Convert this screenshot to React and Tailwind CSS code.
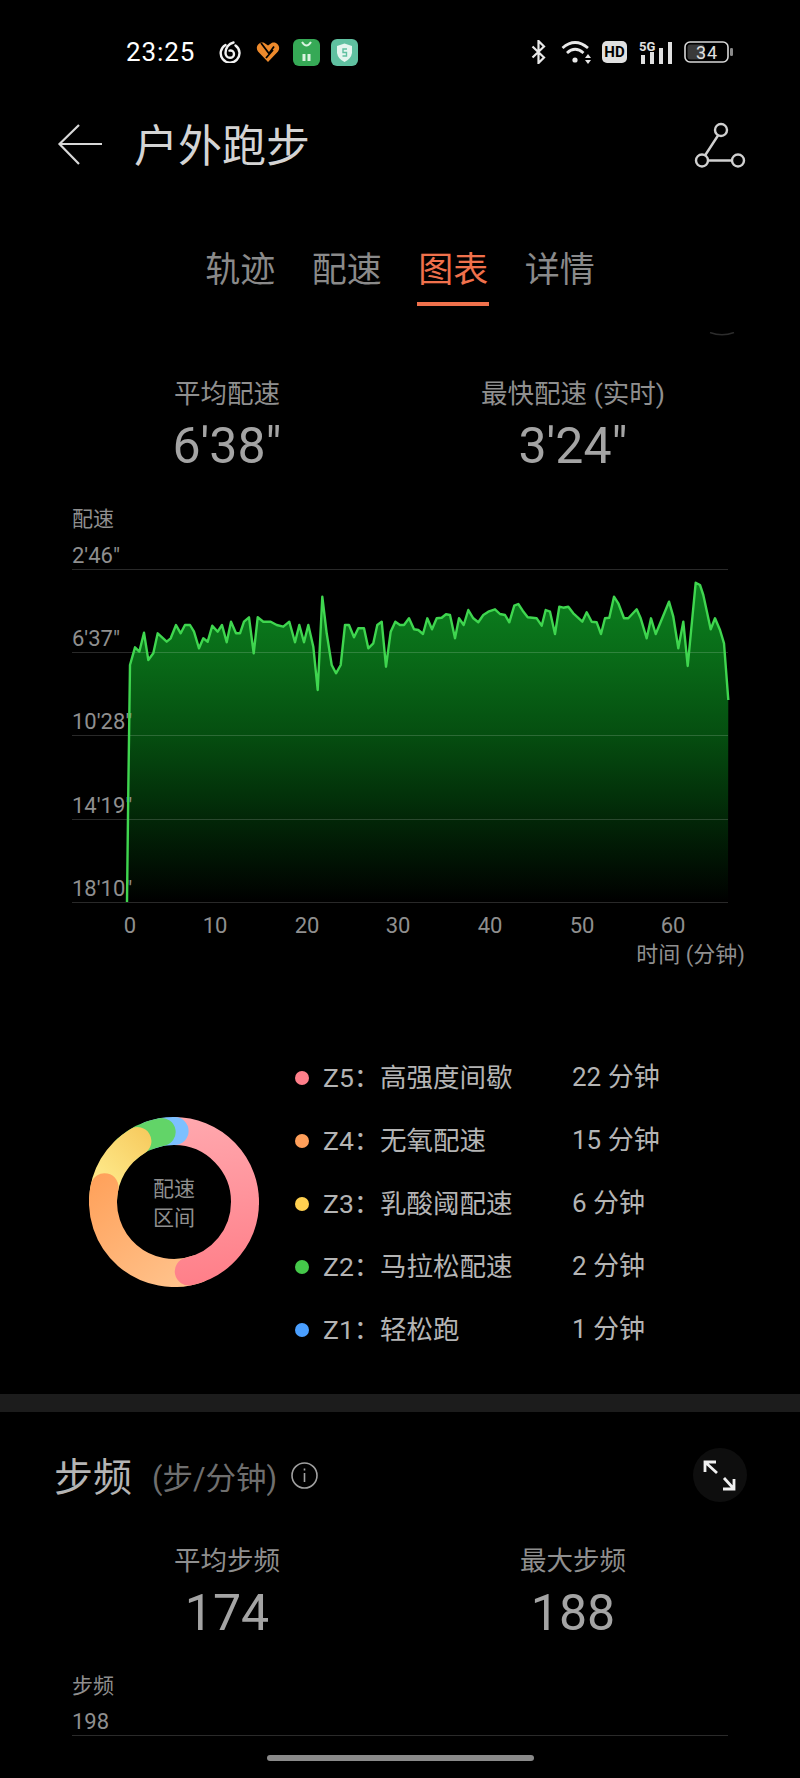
import React from 'react';

const CJK = "font-['Roboto','Noto_Sans_CJK_SC',sans-serif]";

// traced from the reference, in crop coordinates (x/3 + offset, y/3 + 490)
const leftTrace = [
  [235, 900], [240, 525], [250, 490], [255, 472], [268, 485], [282, 428], [295, 510], [310, 490], [323, 430], [350, 455],
  [362, 445], [378, 405], [392, 430], [405, 405], [420, 405], [432, 425], [447, 475], [460, 445], [473, 455], [487, 407],
  [503, 425], [516, 405], [530, 457], [543, 395], [558, 430], [570, 430], [582, 395], [597, 382], [611, 490], [623, 382],
  [640, 395], [662, 395], [680, 405], [700, 410], [718, 395], [735, 457], [748, 405], [762, 457], [775, 405], [790, 470],
  [803, 600], [817, 320], [830, 430], [845, 525], [858, 550], [872, 525], [885, 405], [897, 405], [912, 442], [925, 415],
  [942, 415], [955, 475], [970, 460], [982, 405], [995, 395], [1008, 530], [1022, 425], [1036, 395],
];
const rightTrace = [
  [0, 405], [12, 405], [27, 385], [42, 418], [55, 420], [69, 432], [82, 385], [96, 418], [110, 385], [125, 383],
  [138, 373], [150, 375], [165, 445], [177, 385], [191, 405], [205, 360], [220, 385], [235, 397], [250, 375], [265, 365],
  [285, 358], [300, 372], [315, 375], [328, 397], [343, 347], [355, 342], [368, 362], [383, 382], [410, 385], [425, 407],
  [437, 360], [450, 365], [465, 432], [478, 350], [490, 353], [505, 350], [520, 370], [547, 395], [560, 367], [575, 395],
  [590, 397], [603, 432], [615, 385], [628, 383], [642, 320], [655, 340], [672, 385], [685, 385], [710, 358], [722, 385],
  [740, 445], [753, 385], [767, 432], [807, 335], [820, 380], [835, 475], [850, 395], [863, 528], [887, 278], [900, 285],
  [910, 315], [932, 418], [945, 385], [960, 420], [972, 460], [985, 630],
];
const trace = [
  [127, 902],
  ...leftTrace.map(([x, y]) => [x / 3 + 50, y / 3 + 490]),
  ...rightTrace.map(([x, y]) => [x / 3 + 400, y / 3 + 490]),
];
const linePts = trace.map(([x, y]) => `${x.toFixed(1)},${y.toFixed(1)}`).join(' ');

const yLabels = [
  { text: `2'46"`, y: 569 },
  { text: `6'37"`, y: 652 },
  { text: `10'28"`, y: 735 },
  { text: `14'19"`, y: 819 },
  { text: `18'10"`, y: 902 },
];
const xLabels = [[0, 130], [10, 215], [20, 307], [30, 398], [40, 490], [50, 582], [60, 673]];

const PaceChart = () => (
  <svg viewBox="0 500 800 470" className="block mt-[28px] w-[800px] h-[470px]">
    <defs>
      <linearGradient id="paceFill" gradientUnits="userSpaceOnUse" x1="0" y1="575" x2="0" y2="902">
        <stop offset="0" stopColor="#0c8420" />
        <stop offset="0.24" stopColor="#096c18" />
        <stop offset="0.49" stopColor="#054e10" />
        <stop offset="0.75" stopColor="#022607" />
        <stop offset="1" stopColor="#000000" />
      </linearGradient>
    </defs>
    <text x="72" y="526" fontSize="21" fill="#8f8f8f" fontFamily="Roboto, 'Noto Sans CJK SC', sans-serif">配速</text>
    <polygon points={`${linePts} 728,902`} fill="url(#paceFill)" />
    {yLabels.map((l) => (
      <g key={l.text}>
        <line x1="72" x2="728" y1={l.y + 0.5} y2={l.y + 0.5} stroke="#ffffff" strokeOpacity="0.16" />
        <text x="72" y={l.y - 6} fontSize="22" fill="#8f8f8f" fontFamily="Roboto, sans-serif">{l.text}</text>
      </g>
    ))}
    <polyline points={linePts} fill="none" stroke="#3fd64f" strokeWidth="2.4" strokeLinejoin="round" />
    {xLabels.map(([v, x]) => (
      <text key={v} x={x} y="933" fontSize="22" fill="#8f8f8f" textAnchor="middle" fontFamily="Roboto, sans-serif">{v}</text>
    ))}
    <text x="745" y="962" fontSize="22" fill="#8f8f8f" textAnchor="end" fontFamily="Roboto, 'Noto Sans CJK SC', sans-serif">时间 (分钟)</text>
  </svg>
);

const arc = (from, to, r = 71, c = 85) => {
  const pt = (deg) => {
    const a = ((deg - 90) * Math.PI) / 180;
    return `${(c + r * Math.cos(a)).toFixed(2)} ${(c + r * Math.sin(a)).toFixed(2)}`;
  };
  const large = to - from > 180 ? 1 : 0;
  return `M${pt(from)} A${r} ${r} 0 ${large} 1 ${pt(to)}`;
};

const Donut = () => (
  <svg viewBox="0 0 170 170" className="w-[170px] h-[170px] mb-[4px] shrink-0">
    <defs>
      <linearGradient id="zoneOrange" gradientUnits="userSpaceOnUse" x1="10" y1="60" x2="100" y2="170">
        <stop offset="0" stopColor="#ffa25c" />
        <stop offset="1" stopColor="#ffc48e" />
      </linearGradient>
      <linearGradient id="zoneYellow" gradientUnits="userSpaceOnUse" x1="20" y1="60" x2="70" y2="10">
        <stop offset="0" stopColor="#fde584" />
        <stop offset="1" stopColor="#f6c658" />
      </linearGradient>
      <linearGradient id="zonePink" gradientUnits="userSpaceOnUse" x1="100" y1="0" x2="120" y2="170">
        <stop offset="0" stopColor="#ffa8ae" />
        <stop offset="1" stopColor="#ff7e88" />
      </linearGradient>
    </defs>
    <g fill="none" strokeWidth="28">
      <path d={arc(0, 92)} stroke="url(#zonePink)" />
      <path d={arc(340, 360.5)} stroke="#7cc0ff" strokeLinecap="round" />
      <path d={arc(318, 350)} stroke="#62d468" strokeLinecap="round" />
      <path d={arc(272, 329)} stroke="url(#zoneYellow)" strokeLinecap="round" />
      <path d={arc(160, 282)} stroke="url(#zoneOrange)" strokeLinecap="round" />
      <path d={arc(90, 168)} stroke="url(#zonePink)" strokeLinecap="round" />
    </g>
    <text x="85" y="79" fontSize="21" fill="#8f8f8f" textAnchor="middle" fontFamily="'Noto Sans CJK SC', sans-serif">配速</text>
    <text x="85" y="108" fontSize="21" fill="#8f8f8f" textAnchor="middle" fontFamily="'Noto Sans CJK SC', sans-serif">区间</text>
  </svg>
);

const zones = [
  { dot: 'bg-[#ff7f8a]', zone: 'Z5：', name: '高强度间歇', value: '22 分钟' },
  { dot: 'bg-[#ff9f5a]', zone: 'Z4：', name: '无氧配速', value: '15 分钟' },
  { dot: 'bg-[#ffd050]', zone: 'Z3：', name: '乳酸阈配速', value: '6 分钟' },
  { dot: 'bg-[#45c84a]', zone: 'Z2：', name: '马拉松配速', value: '2 分钟' },
  { dot: 'bg-[#4a9fff]', zone: 'Z1：', name: '轻松跑', value: '1 分钟' },
];

const Stat = ({ label, value }) => (
  <div className="flex flex-col items-center">
    <div className="text-[26.5px] leading-[32px] text-[#8f8f8f] whitespace-nowrap">{label}</div>
    <div className="mt-[8px] text-[50px] leading-[56px] text-[#a4a4a4]">{value}</div>
  </div>
);

const StatusBar = () => (
  <div className="flex items-center h-[28px] mt-[38px] pl-[126px] pr-[66px]">
    <span className="text-[26px] leading-[28px] text-white tracking-[0.9px] font-['Roboto',sans-serif]">23:25</span>
    <svg viewBox="0 0 22 22" className="ml-[24px] w-[22px] h-[22px]" fill="none" stroke="#f2f2f2" strokeWidth="2.4" strokeLinecap="round">
      <path d="M6.5 4 A9.4 9.4 0 1 0 16.5 4.5" />
      <path d="M14.5 1.5 C9.5 2.5 6.5 7 6.5 12 C6.5 15 8.5 16.8 11 16.8 C13.5 16.8 15 15 15 13 C15 10.5 13 9 10.5 9.6" />
    </svg>
    <svg viewBox="0 0 24 20" className="ml-[15px] w-[24px] h-[20px]">
      <path d="M12 20 L2 9.5 C-1.5 4.5 3.5 -1 8 0.8 L12 3.5 L16 0.8 C20.5 -1 25.5 4.5 22 9.5 Z" fill="#ee8a2c" />
      <path d="M5 1 L13 11.5 L18 4.5 M10 16 L17 8" fill="none" stroke="#000000" strokeWidth="1.8" />
    </svg>
    <svg viewBox="0 0 27 27" className="ml-[13px] w-[27px] h-[27px]">
      <rect width="27" height="27" rx="6" fill="#36a956" />
      <path d="M9 3 Q13.5 10 18 3" fill="none" stroke="#d8f3df" strokeWidth="2" />
      <rect x="9.5" y="15" width="3" height="7" fill="#d8f3df" />
      <rect x="14.5" y="15" width="3" height="7" fill="#d8f3df" />
    </svg>
    <svg viewBox="0 0 27 27" className="ml-[11px] w-[27px] h-[27px]">
      <rect width="27" height="27" rx="6" fill="#5fc0a0" />
      <path d="M6 7 L13.5 4.5 L21 7 V14 Q20 20 13.5 23 Q7 20 6 14 Z" fill="#e4f5ef" />
      <path d="M16 10 H12 V13.5 H15.5 V17 H11.5" fill="none" stroke="#5fc0a0" strokeWidth="1.4" />
    </svg>

    <div className="ml-auto flex items-center">
      <svg viewBox="0 0 15 24" className="w-[15px] h-[24px]" fill="none" stroke="#e8e8e8" strokeWidth="2.2">
        <path d="M1.5 6.5 L13 17.5 L7.5 23 V1 L13 6.5 L1.5 17.5" />
      </svg>
      <svg viewBox="0 0 31 24" className="ml-[15px] w-[31px] h-[24px]" fill="none" stroke="#e8e8e8" strokeWidth="2.8">
        <path d="M1.5 8 Q14 -3 27 8" />
        <path d="M6 13 Q14 5.5 22.5 13" />
        <circle cx="14" cy="20" r="2.6" fill="#e8e8e8" stroke="none" />
        <path d="M27 14 L30 18 H24 Z M27 24 L30 20 H24 Z" fill="#e8e8e8" stroke="none" />
      </svg>
      <div className="ml-[10px] w-[25px] h-[22px] rounded-[5px] bg-[#e0e0e0] flex items-center justify-center text-[15px] leading-none font-bold text-black font-['Roboto',sans-serif]">
        HD
      </div>
      <svg viewBox="0 0 34 24" className="ml-[12px] w-[34px] h-[24px]" fill="#e0e0e0">
        <text x="0" y="11" fontSize="13" fontWeight="700" fontFamily="Roboto, sans-serif">5G</text>
        <rect x="2" y="15" width="4" height="9" />
        <rect x="11" y="12" width="4" height="12" />
        <rect x="20" y="8" width="4" height="16" />
        <rect x="29" y="2" width="4" height="22" />
      </svg>
      <svg viewBox="0 0 50 22" className="ml-[11px] w-[50px] h-[22px]">
        <rect x="1" y="1" width="43" height="20" rx="5" fill="none" stroke="#d8d8d8" strokeWidth="1.6" />
        <rect x="3.5" y="3.5" width="17" height="15" rx="3" fill="#3a3a3a" />
        <rect x="46" y="7" width="3" height="8" rx="1.2" fill="#8a8a8a" />
        <text x="23" y="17.5" fontSize="18" fill="#e0e0e0" textAnchor="middle" fontFamily="Roboto, sans-serif" letterSpacing="1">34</text>
      </svg>
    </div>
  </div>
);

const tabs = ['轨迹', '配速', '图表', '详情'];

export default function App() {
  return (
    <div className={`w-[800px] h-[1778px] overflow-hidden bg-black ${CJK}`}>
      <StatusBar />

      {/* header */}
      <div className="flex items-center justify-between h-[60px] mt-[49px] pl-[56px] pr-[54px]">
        <div className="flex items-center">
          <svg viewBox="0 0 48 44" className="w-[48px] h-[44px]" fill="none" stroke="#d8d8d8" strokeWidth="2.2">
            <path d="M23 2 L3.5 21 L23 41" />
            <path d="M3.5 21 H46" />
          </svg>
          <h1 className="ml-[30px] mt-[3px] text-[44px] leading-[60px] text-[#d4d4d4]">户外跑步</h1>
        </div>
        <svg viewBox="0 0 52 48" className="w-[52px] h-[48px]" fill="none" stroke="#d0d0d0" strokeWidth="2.4">
          <circle cx="27" cy="9" r="6" />
          <circle cx="8" cy="39.5" r="6" />
          <circle cx="44" cy="39.5" r="6" />
          <path d="M24 14.5 L11 34.5 M14 39.5 H38" />
        </svg>
      </div>

      {/* tabs */}
      <div className="flex justify-center gap-[36.5px] mt-[76px]">
        {tabs.map((t) => (
          <div key={t} className="flex flex-col items-center w-[70px]">
            <span className={`text-[35px] leading-[40px] whitespace-nowrap ${t === '图表' ? 'text-[#f0714c]' : 'text-[#8a8a8a]'}`}>{t}</span>
            <span className={`mt-[11px] h-[4px] w-[72px] shrink-0 ${t === '图表' ? 'bg-[#f0714c]' : 'bg-transparent'}`} />
          </div>
        ))}
      </div>

      <div className="flex justify-end pr-[65px] mt-[26px]">
        <svg viewBox="0 0 26 4" className="block w-[26px] h-[4px]" fill="none" stroke="#2c2c2c" strokeWidth="1.5">
          <path d="M1 0.5 Q13 5 25 0.5" />
        </svg>
      </div>

      {/* pace */}
      <div className="grid grid-cols-2 px-[54px] mt-[42px] h-[94px]">
        <Stat label="平均配速" value={`6'38"`} />
        <Stat label="最快配速 (实时)" value={`3'24"`} />
      </div>

      <PaceChart />

      {/* pace zones */}
      <div className="flex items-center mt-[76px] pl-[89px]">
        <Donut />
        <div className="ml-[36px]">
          {zones.map((z) => (
            <div key={z.zone} className="flex items-center h-[63px] text-[26.5px] text-[#b4b4b4]">
              <span className={`w-[14px] h-[14px] rounded-full mr-[14px] ${z.dot}`} />
              <span className="w-[57px] whitespace-nowrap">{z.zone}</span>
              <span className="w-[192px] whitespace-nowrap">{z.name}</span>
              <span className="whitespace-nowrap text-[26px]">{z.value}</span>
            </div>
          ))}
        </div>
      </div>

      <div className="h-[18px] mt-[33px] bg-[#1c1c1c]" />

      {/* cadence */}
      <div className="flex items-center justify-between h-[56px] mt-[35px] pl-[54px] pr-[53px]">
        <div className="flex items-center">
          <span className="mt-[6px] text-[39px] leading-[56px] text-[#b4b4b4]">步频</span>
          <span className="ml-[20px] mt-[8px] text-[30.5px] leading-[56px] text-[#6f6f6f]">(步/分钟)</span>
          <svg viewBox="0 0 27 27" className="ml-[14px] w-[27px] h-[27px]" fill="none" stroke="#a0a0a0" strokeWidth="1.6">
            <circle cx="13.5" cy="13.5" r="12.5" />
            <path d="M13.5 11 V20 M13.5 6.5 V8.5" />
          </svg>
        </div>
        <div className="w-[54px] h-[54px] rounded-full bg-[#0e0e0e] flex items-center justify-center">
          <svg viewBox="0 0 54 54" className="w-[54px] h-[54px]" fill="none" stroke="#f0f0f0" strokeWidth="2.8">
            <path d="M12 24 V14 H23 M12 14 L24 25" />
            <path d="M41 31 V41 H30 M41 41 L31 30" />
          </svg>
        </div>
      </div>

      <div className="grid grid-cols-2 px-[54px] mt-[42px] h-[94px]">
        <Stat label="平均步频" value="174" />
        <Stat label="最大步频" value="188" />
      </div>

      <div className="ml-[72px] mt-[35px] text-[21px] leading-[24px] text-[#8f8f8f]">步频</div>
      <div className="ml-[72px] mt-[12px] text-[22px] leading-[24px] text-[#8f8f8f]">198</div>
      <div className="mx-[72px] mt-px h-px bg-[#2a2a2a]" />

      <div className="mx-auto mt-[19px] w-[267px] h-[6px] rounded-full bg-[#8a8a8a]" />
    </div>
  );
}
